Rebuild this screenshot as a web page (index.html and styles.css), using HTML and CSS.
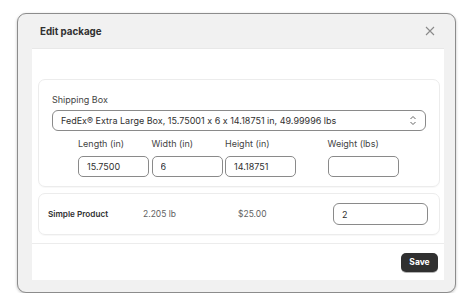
FILE: index.html
```html
<!DOCTYPE html>
<html lang="en">
<head>
  <meta charset="UTF-8" />
  <title>Edit package</title>
  <link rel="stylesheet" href="styles.css">
</head>
<body>
  <div class="modal">
    <div class="modal-header">
      <h2>Edit package</h2>
      <button class="close" aria-label="Close">
        <svg width="10" height="10" viewBox="0 0 10 10"><path d="M1 1L9 9M9 1L1 9" stroke="#8a8a8a" stroke-width="1.1" fill="none"/></svg>
      </button>
    </div>

    <div class="modal-body">
      <div class="spacer"></div>

      <div class="card box-card">
        <label class="field-label">Shipping Box</label>
        <div class="select">
          <span>FedEx® Extra Large Box, 15.75001 x 6 x 14.18751 in, 49.99996 lbs</span>
          <svg width="8" height="11" viewBox="0 0 8 11"><path d="M1.5 4L4 1.5L6.5 4M1.5 7L4 9.5L6.5 7" stroke="#666" stroke-width="1" fill="none"/></svg>
        </div>

        <div class="dims">
          <div class="dim">
            <label>Length (in)</label>
            <input type="text" value="15.7500" />
          </div>
          <div class="dim">
            <label>Width (in)</label>
            <input type="text" value="6" />
          </div>
          <div class="dim">
            <label>Height (in)</label>
            <input type="text" value="14.18751" />
          </div>
          <div class="dim weight">
            <label>Weight (lbs)</label>
            <input type="text" value="" />
          </div>
        </div>
      </div>

      <div class="card product-card">
        <span class="product-name">Simple Product</span>
        <span class="product-weight">2.205 lb</span>
        <span class="product-price">$25.00</span>
        <input type="text" class="qty" value="2" />
      </div>

      <div class="footer">
        <button class="save">Save</button>
      </div>
    </div>
  </div>
</body>
</html>
```

FILE: styles.css
```css
body {
  margin: 0;
  background: #ffffff;
  font-family: 'Inter', 'Noto Sans', sans-serif;
  font-feature-settings: "calt" 0;
  color: #303030;
}

.modal {
  box-sizing: border-box;
  width: 439px;
  height: 280px;
  margin: 13px 0 0 17px;
  background: #f1f1f1;
  border: 1px solid #8c8c8c;
  border-radius: 9px;
  box-shadow: 0 1px 3px rgba(0, 0, 0, 0.25);
  display: flex;
  flex-direction: column;
}

.modal-header {
  height: 34px;
  display: flex;
  align-items: center;
  justify-content: space-between;
  padding: 0 20px 0 22px;
}

.modal-header h2 {
  margin: 0;
  font-size: 9.75px;
  font-weight: 700;
  color: #303030;
}

.close {
  background: none;
  border: none;
  padding: 0;
  display: flex;
  cursor: pointer;
}

.modal-body {
  flex: 1;
  background: #ffffff;
  margin: 0 11px 12px 14px;
  border-top: 1px solid #e8e8e8;
  display: flex;
  flex-direction: column;
}

.spacer {
  height: 30px;
}

.card {
  margin: 0 4px 0 6px;
  border: 1px solid #ececec;
  border-radius: 7px;
  box-shadow: 0 1px 1px rgba(0, 0, 0, 0.03);
}

.box-card {
  height: 108px;
  box-sizing: border-box;
  padding: 14px 13px 0 13px;
}

.field-label {
  display: block;
  font-size: 9px;
  color: #444;
  line-height: 12px;
  margin-bottom: 4px;
}

.select {
  height: 21px;
  box-sizing: border-box;
  border: 1px solid #8a8a8a;
  border-radius: 6px;
  display: flex;
  align-items: center;
  justify-content: space-between;
  padding: 0 8px 0 8px;
  font-size: 9px;
  color: #303030;
}

.dims {
  display: flex;
  padding-left: 26px;
  margin-top: 7px;
}

.dim {
  width: 71px;
  margin-right: 2.5px;
}

.dim.weight {
  margin-left: 29px;
}

.dim label {
  display: block;
  font-size: 9px;
  color: #444;
  line-height: 12px;
  margin-bottom: 4px;
}

input {
  box-sizing: border-box;
  width: 100%;
  height: 21px;
  border: 1px solid #8a8a8a;
  border-radius: 5px;
  padding: 0 8px;
  font-family: 'Inter', 'Noto Sans', sans-serif;
  font-size: 9px;
  color: #303030;
  background: #fff;
}

.product-card {
  margin-top: 6px;
  height: 42px;
  box-sizing: border-box;
  display: flex;
  align-items: center;
  padding: 0 9px;
  font-size: 8.5px;
}

.product-name {
  font-weight: 600;
  font-size: 8.2px;
  width: 95px;
  color: #303030;
}

.product-weight {
  width: 95px;
  color: #616161;
}

.product-price {
  width: 95px;
  color: #616161;
}

.qty {
  width: 95px;
  height: 22px;
  border-radius: 6px;
}

.footer {
  margin-top: 8px;
  border-top: 1px solid #ececec;
  flex: 1;
  display: flex;
  justify-content: flex-end;
  align-items: center;
  padding-right: 6px;
}

.save {
  background: #303030;
  color: #ffffff;
  border: none;
  border-radius: 5px;
  height: 19px;
  width: 37px;
  padding: 0;
  font-family: 'Inter', 'Noto Sans', sans-serif;
  font-size: 8.5px;
  font-weight: 700;
  box-shadow: 0 1px 0 rgba(0, 0, 0, 0.3);
  cursor: pointer;
}
```
